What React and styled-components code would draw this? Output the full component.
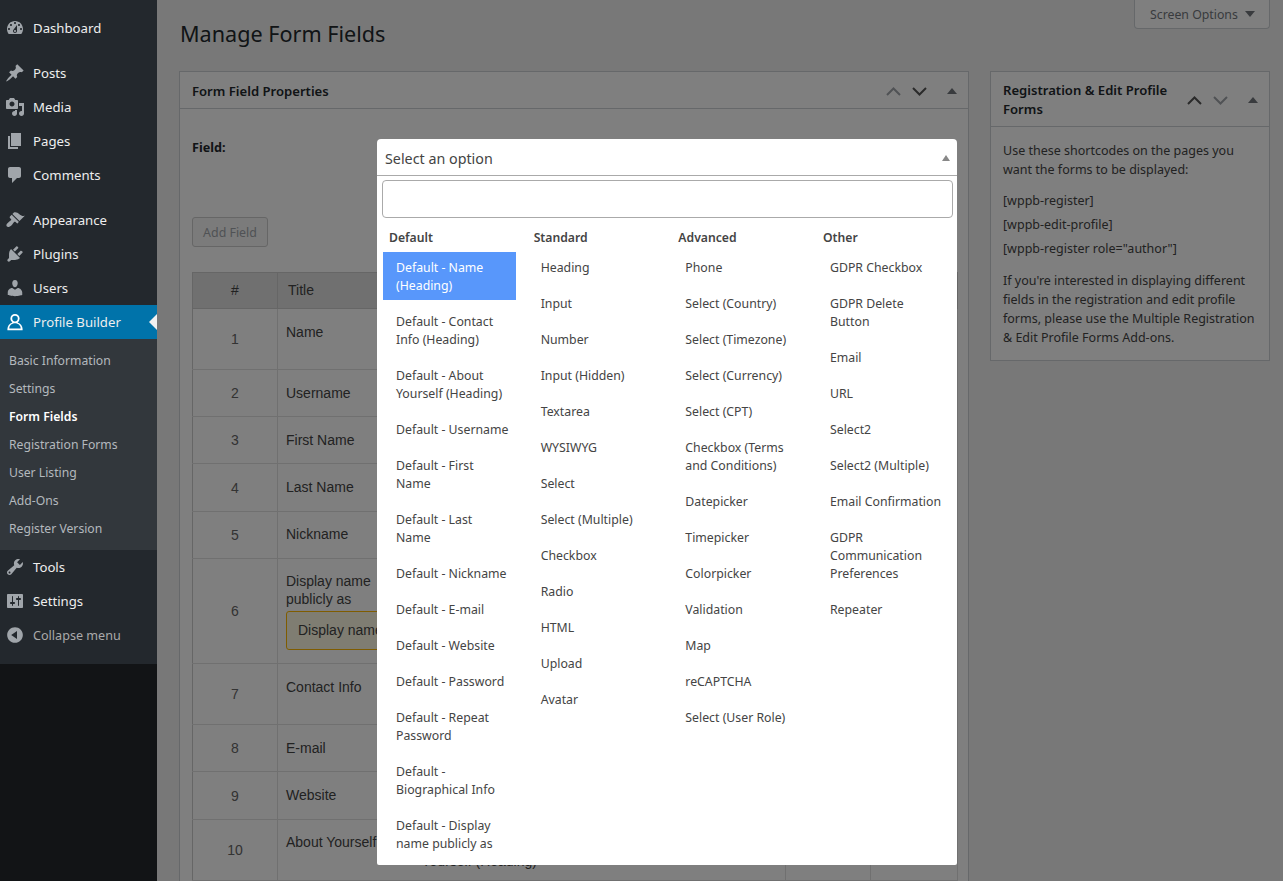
import styled, { createGlobalStyle } from "styled-components";

const GlobalStyle = createGlobalStyle`
  html, body {
    margin: 0;
    padding: 0;
    background: #f1f1f1;
  }
  * {
    box-sizing: border-box;
  }
`;

const UI_FONT = `"Noto Sans", "Open Sans", sans-serif`;

const Root = styled.div`
  display: flex;
  width: 1283px;
  height: 881px;
  overflow: hidden;
  position: relative;
  font-family: ${UI_FONT};
  color: #444;
`;

const Sidebar = styled.aside`
  width: 157px;
  flex: none;
  background: #121416;
`;

const Menu = styled.nav`
  background: #23282d;
  padding: 11px 0 12px;
`;

const MenuRow = styled.div`
  position: relative;
  display: flex;
  align-items: center;
  gap: 8px;
  height: 34px;
  padding-left: 5px;
  margin-bottom: ${(p) => (p.$sep ? "11px" : "0")};
  background: ${(p) => (p.$active ? "#0073aa" : "transparent")};
  color: ${(p) => (p.$dim ? "#aaa" : "#eee")};
  font-size: ${(p) => (p.$dim ? "12.6px" : "13.2px")};
  svg {
    flex: none;
    fill: ${(p) => (p.$active ? "#fff" : "#a0a5aa")};
  }
`;

const ActiveArrow = styled.span`
  position: absolute;
  right: 0;
  top: 9px;
  border: 8px solid transparent;
  border-left: 0;
  border-right-color: #f1f1f1;
`;

const SubMenu = styled.div`
  background: #32373c;
  padding: 8px 0 7px;
`;

const SubItem = styled.div`
  height: 28px;
  line-height: 28px;
  padding-left: 9px;
  font-size: 12.2px;
  font-weight: ${(p) => (p.$active ? 600 : 400)};
  color: ${(p) => (p.$active ? "#fff" : "#b4b9be")};
`;

const Main = styled.main`
  position: relative;
  flex: 1;
  padding: 0 13px 0 22px;
  min-width: 0;
`;

const Overlay = styled.div`
  position: absolute;
  inset: 0;
  background: rgba(0, 0, 0, 0.5);
`;

const TopBar = styled.header`
  display: flex;
  justify-content: space-between;
  align-items: flex-start;
  height: 71px;
`;

const Title = styled.h1`
  margin: 0;
  padding: 18px 0 0 1px;
  font-size: 21.6px;
  line-height: 32px;
  font-weight: 400;
  color: #23282d;
`;

const ScreenOptions = styled.button`
  display: flex;
  align-items: center;
  gap: 7px;
  width: 136px;
  height: 29px;
  padding: 0 0 0 15px;
  background: #fff;
  border: 1px solid #ccd0d4;
  border-top: 0;
  border-radius: 0 0 4px 4px;
  font-family: inherit;
  font-size: 12.3px;
  color: #72777c;
`;

const DownTri = styled.span`
  border: 5px solid transparent;
  border-top: 6px solid #72777c;
  border-bottom: 0;
`;

const Columns = styled.div`
  display: flex;
  align-items: flex-start;
  gap: 21px;
`;

const Box = styled.section`
  width: ${(p) => p.$width}px;
  flex: none;
  background: #fff;
  border: 1px solid #ccd0d4;
`;

const BoxHead = styled.div`
  display: flex;
  align-items: center;
  justify-content: space-between;
  min-height: 37px;
  padding: 9px 12px 7px;
  border-bottom: 1px solid #ccd0d4;
  font-size: 13.1px;
  line-height: 19px;
  font-weight: 600;
  color: #23282d;
  white-space: pre;
`;

const BoxControls = styled.div`
  display: flex;
  align-items: center;
  gap: 9px;
  margin-right: -1px;
`;

const Chevron = styled.svg`
  width: 17px;
  height: 11px;
  fill: none;
  stroke: ${(p) => (p.$muted ? "#a0a5aa" : "#555")};
  stroke-width: 2;
`;

const UpTri = styled.span`
  margin-left: 10px;
  border: 5px solid transparent;
  border-bottom: 6px solid #72777c;
  border-top: 0;
`;

const FormBody = styled.div`
  padding: 29px 12px 0;
`;

const FieldLabel = styled.div`
  font-size: 12.6px;
  line-height: 20px;
  font-weight: 700;
  color: #23282d;
  height: 79px;
`;

const AddButton = styled.button`
  display: block;
  width: 76px;
  height: 30px;
  padding: 0;
  background: #f7f7f7;
  border: 1px solid #ccc;
  border-radius: 3px;
  font-family: inherit;
  font-size: 12.4px;
  color: #a0a5aa;
`;

const Table = styled.table`
  width: 765px;
  margin-top: 25px;
  border-collapse: collapse;
  table-layout: fixed;
  border: 1px solid #ccc;
  font-family: "Liberation Sans", Arial, sans-serif;
  font-size: 14px;
  color: #444;
`;

const HeadCell = styled.th`
  height: 36px;
  padding: 0 10px 2px;
  background: #e1e1e1;
  border: 1px solid #ccc;
  font-weight: 400;
  text-align: ${(p) => (p.$center ? "center" : "left")};
`;

const NumCell = styled.td`
  border: 1px solid #e1e1e1;
  border-left-color: #ccc;
  text-align: center;
  color: #666;
`;

const TextCell = styled.td`
  padding: ${(p) => p.$top || 14}px 8px 0;
  border: 1px solid #e1e1e1;
  ${(p) => p.$openRight && "border-right: 0;"}
  ${(p) => p.$openLeft && "border-left: 0;"}
  vertical-align: top;
  line-height: 18px;
  white-space: pre;
`;

const Notice = styled.div`
  width: 300px;
  height: 39px;
  margin-top: 3px;
  padding: 0 11px;
  line-height: 37px;
  background: #fffbe5;
  border: 1px solid #ffb900;
  border-radius: 3px;
`;

const SideText = styled.div`
  padding: 14px 12px 13px;
  font-size: 12.5px;
  line-height: 19px;
  color: #444;
  p {
    margin: 0 0 10px;
  }
  p:last-child {
    margin: 0;
  }
`;

const Shortcode = styled.div`
  line-height: 24px;
  margin-bottom: 10px;
`;

const Dropdown = styled.div`
  position: absolute;
  left: 377px;
  top: 139px;
  width: 580px;
  height: 726px;
  overflow: hidden;
  background: #fff;
  border-radius: 4px 4px 2px 2px;
`;

const Trigger = styled.div`
  display: flex;
  align-items: center;
  justify-content: space-between;
  height: 37px;
  padding: 2px 7px 0 8px;
  border-bottom: 1px solid #aaa;
  font-size: 14.3px;
  color: #444;
`;

const TriggerArrow = styled.span`
  border: 4px solid transparent;
  border-bottom: 6px solid #888;
  border-top: 0;
`;

const Search = styled.input`
  display: block;
  width: 571px;
  height: 38px;
  margin: 4px 0 0 5px;
  border: 1px solid #aaa;
  border-radius: 4px;
  background: #fff;
`;

const Groups = styled.div`
  display: grid;
  grid-template-columns: repeat(4, 144.67px);
  padding: 8px 0 0 1px;
`;

const Group = styled.div`
  display: flex;
  flex-direction: column;
`;

const GroupLabel = styled.div`
  height: 23px;
  line-height: 23px;
  padding-left: 11px;
  font-size: 12.2px;
  font-weight: 600;
  color: #444;
`;

const Option = styled.div`
  margin: 3px 6.67px 3px 5px;
  padding: 7px 13px 5px;
  font-size: 12.3px;
  line-height: 18px;
  white-space: pre;
  color: ${(p) => (p.$selected ? "#fff" : "#444")};
  background: ${(p) => (p.$selected ? "#5897fb" : "transparent")};
`;

const ICONS = {
  dashboard:
    "M3.76 16h12.48c1.1-1.37 1.76-3.11 1.76-5 0-4.42-3.58-8-8-8s-8 3.58-8 8c0 1.89.66 3.63 1.76 5zM10 4c.55 0 1 .45 1 1s-.45 1-1 1-1-.45-1-1 .45-1 1-1zM6 6c.55 0 1 .45 1 1s-.45 1-1 1-1-.45-1-1 .45-1 1-1zm8 0c.55 0 1 .45 1 1s-.45 1-1 1-1-.45-1-1 .45-1 1-1zm-5.37 5.55L12 7v6c0 1.1-.9 2-2 2s-2-.9-2-2c0-.57.24-1.08.63-1.45zM4 10c.55 0 1 .45 1 1s-.45 1-1 1-1-.45-1-1 .45-1 1-1zm12 0c.55 0 1 .45 1 1s-.45 1-1 1-1-.45-1-1 .45-1 1-1zm-5 3c0-.55-.45-1-1-1s-1 .45-1 1 .45 1 1 1 1-.45 1-1z",
  posts:
    "M10.44 3.02l1.82-1.82 6.36 6.35-1.83 1.82c-1.05-.68-2.48-.57-3.41.36l-.75.75c-.92.93-1.04 2.35-.35 3.41l-1.83 1.82-2.41-2.41-2.8 2.79c-.42.42-3.38 2.71-3.8 2.29s1.86-3.39 2.28-3.81l2.79-2.79L4.1 9.36l1.83-1.82c1.05.69 2.48.57 3.4-.36l.75-.75c.93-.92 1.05-2.35.36-3.41z",
  media:
    "M13 11V4c0-.55-.45-1-1-1h-1.67L9 1H5L3.67 3H2c-.55 0-1 .45-1 1v7c0 .55.45 1 1 1h10c.55 0 1-.45 1-1zM7 4.5c1.38 0 2.5 1.12 2.5 2.5S8.38 9.5 7 9.5 4.5 8.38 4.5 7 5.62 4.5 7 4.5zM14 6h5v10.5c0 1.38-1.12 2.5-2.5 2.5S14 17.88 14 16.5s1.12-2.5 2.5-2.5c.17 0 .34.02.5.05V9h-3V6zm-4 8.05V13h2v3.5c0 1.38-1.12 2.5-2.5 2.5S7 17.88 7 16.5 8.12 14 9.5 14c.17 0 .34.02.5.05z",
  pages: "M6 15V2h10v13H6zm-1 1h8v2H3V5h2v11z",
  comments:
    "M5 2h9c1.1 0 2 .9 2 2v7c0 1.1-.9 2-2 2h-2l-5 5v-5H5c-1.1 0-2-.9-2-2V4c0-1.1.9-2 2-2z",
  appearance:
    "M14.48 11.06L7.41 3.99l1.5-1.5c.5-.56 2.3-.47 3.51.32 1.21.8 1.43 1.28 2.91 2.1 1.18.64 2.45 1.26 4.45.85zm-.71.71L6.7 4.7 4.93 6.47c-.39.39-.39 1.02 0 1.41l1.06 1.06c.39.39.39 1.03 0 1.42-.6.6-1.43 1.11-2.21 1.69-.35.26-.7.53-1.01.84C1.43 13.71.96 15.65 1.91 16.6c.95.95 2.89.48 4.7-1.33.31-.31.58-.66.84-1.01.58-.78 1.09-1.61 1.69-2.21.39-.39 1.03-.39 1.42 0l1.06 1.06c.39.39 1.02.39 1.41 0z",
  plugins:
    "M13.11 4.36L9.87 7.6 8 5.73l3.24-3.24c.35-.34 1.05-.2 1.56.32.52.51.66 1.21.31 1.55zm-8 1.77l.91-1.12 9.01 9.01-1.19.84c-.71.71-2.63 1.16-3.82 1.16H6.14L4.9 17.26c-.59.59-1.54.59-2.12 0-.59-.58-.59-1.53 0-2.12l1.24-1.24v-3.88c0-1.13.4-3.19 1.09-3.89zm7.26 3.97l3.24-3.24c.34-.35 1.04-.21 1.55.31.52.51.66 1.21.31 1.55l-3.24 3.25z",
  users:
    "M10 9.25c-2.27 0-2.73-3.44-2.73-3.44C7 4.02 7.82 2 9.97 2c2.16 0 2.98 2.02 2.71 3.81 0 0-.41 3.44-2.68 3.44zm0 2.57L12.72 10c2.39 0 4.52 2.33 4.52 4.53v2.49s-3.65 1.13-7.24 1.13c-3.65 0-7.24-1.13-7.24-1.13v-2.49c0-2.25 1.94-4.48 4.47-4.48z",
  tools:
    "M16.68 9.77c-1.34 1.34-3.3 1.67-4.95.99l-5.41 6.52c-.99.99-2.59.99-3.58 0s-.99-2.59 0-3.57l6.52-5.42c-.68-1.65-.35-3.61.99-4.95 1.28-1.28 3.12-1.62 4.72-1.06l-2.89 2.89 2.82 2.82 2.86-2.87c.53 1.58.18 3.39-1.08 4.65zM3.81 16.21c.4.39 1.04.39 1.43 0 .4-.4.4-1.04 0-1.43-.39-.4-1.03-.4-1.43 0-.39.39-.39 1.03 0 1.43z",
  settings:
    "M18 16V4c0-.55-.45-1-1-1H3c-.55 0-1 .45-1 1v12c0 .55.45 1 1 1h14c.55 0 1-.45 1-1zM8 11h1c.55 0 1 .45 1 1s-.45 1-1 1H8v1.5c0 .28-.22.5-.5.5s-.5-.22-.5-.5V13H6c-.55 0-1-.45-1-1s.45-1 1-1h1V5.5c0-.28.22-.5.5-.5s.5.22.5.5V11zm5-2h-1c-.55 0-1-.45-1-1s.45-1 1-1h1V5.5c0-.28.22-.5.5-.5s.5.22.5.5V7h1c.55 0 1 .45 1 1s-.45 1-1 1h-1v5.5c0 .28-.22.5-.5.5s-.5-.22-.5-.5V9z",
  collapse:
    "M10 2.16c4.33 0 7.84 3.51 7.84 7.84s-3.51 7.84-7.84 7.84S2.16 14.33 2.16 10 5.71 2.16 10 2.16zm2 11.72V6.12L6.18 9.97z",
  profile:
    "M10 2a4.6 4.6 0 0 0-4.6 4.6c0 1.6.8 3 2 3.8C4.4 11.5 2.4 14 2.4 17v1.2h15.2V17c0-3-2-5.5-5-6.6a4.6 4.6 0 0 0 2-3.8A4.6 4.6 0 0 0 10 2zm0 1.8a2.8 2.8 0 1 1 0 5.6 2.8 2.8 0 0 1 0-5.6zm0 7.4c3.2 0 5.6 2.2 5.7 5.2H4.3c.1-3 2.5-5.2 5.7-5.2z",
};

function Icon({ name }) {
  return (
    <svg width="20" height="20" viewBox="0 0 20 20">
      <path d={ICONS[name]} />
    </svg>
  );
}

function BoxButtons({ upMuted, downMuted }) {
  return (
    <BoxControls>
      <Chevron $muted={upMuted} viewBox="0 0 17 11">
        <path d="M2 9l6.500-6.500L15 9" />
      </Chevron>
      <Chevron $muted={downMuted} viewBox="0 0 17 11">
        <path d="M2 2l6.500 6.500L15 2" />
      </Chevron>
      <UpTri />
    </BoxControls>
  );
}

const TOP_MENU = [
  { icon: "dashboard", label: "Dashboard", sep: true },
  { icon: "posts", label: "Posts" },
  { icon: "media", label: "Media" },
  { icon: "pages", label: "Pages" },
  { icon: "comments", label: "Comments", sep: true },
  { icon: "appearance", label: "Appearance" },
  { icon: "plugins", label: "Plugins" },
  { icon: "users", label: "Users" },
];

const SUB_MENU = [
  "Basic Information",
  "Settings",
  "Form Fields",
  "Registration Forms",
  "User Listing",
  "Add-Ons",
  "Register Version",
];

const ROWS = [
  { title: "Name", height: 61 },
  { title: "Username", height: 47 },
  { title: "First Name", height: 47 },
  { title: "Last Name", height: 48 },
  { title: "Nickname", height: 47, top: 13 },
  { title: "Display name\npublicly as", height: 105, top: 13, notice: "Display name publicly as" },
  { title: "Contact Info", height: 61 },
  { title: "E-mail", height: 47 },
  { title: "Website", height: 48 },
  { title: "About Yourself", height: 61, top: 13, meta: "Default - About\nYourself (Heading)" },
];

const GROUPS = [
  {
    label: "Default",
    options: [
      "Default - Name\n(Heading)",
      "Default - Contact\nInfo (Heading)",
      "Default - About\nYourself (Heading)",
      "Default - Username",
      "Default - First\nName",
      "Default - Last\nName",
      "Default - Nickname",
      "Default - E-mail",
      "Default - Website",
      "Default - Password",
      "Default - Repeat\nPassword",
      "Default -\nBiographical Info",
      "Default - Display\nname publicly as",
    ],
  },
  {
    label: "Standard",
    options: [
      "Heading",
      "Input",
      "Number",
      "Input (Hidden)",
      "Textarea",
      "WYSIWYG",
      "Select",
      "Select (Multiple)",
      "Checkbox",
      "Radio",
      "HTML",
      "Upload",
      "Avatar",
    ],
  },
  {
    label: "Advanced",
    options: [
      "Phone",
      "Select (Country)",
      "Select (Timezone)",
      "Select (Currency)",
      "Select (CPT)",
      "Checkbox (Terms\nand Conditions)",
      "Datepicker",
      "Timepicker",
      "Colorpicker",
      "Validation",
      "Map",
      "reCAPTCHA",
      "Select (User Role)",
    ],
  },
  {
    label: "Other",
    options: [
      "GDPR Checkbox",
      "GDPR Delete\nButton",
      "Email",
      "URL",
      "Select2",
      "Select2 (Multiple)",
      "Email Confirmation",
      "GDPR\nCommunication\nPreferences",
      "Repeater",
    ],
  },
];

export default function App() {
  return (
    <Root>
      <GlobalStyle />
      <Sidebar>
        <Menu>
          {TOP_MENU.map((item) => (
            <MenuRow key={item.label} $sep={item.sep}>
              <Icon name={item.icon} />
              {item.label}
            </MenuRow>
          ))}
          <MenuRow $active>
            <Icon name="profile" />
            Profile Builder
            <ActiveArrow />
          </MenuRow>
          <SubMenu>
            {SUB_MENU.map((label) => (
              <SubItem key={label} $active={label === "Form Fields"}>
                {label}
              </SubItem>
            ))}
          </SubMenu>
          <MenuRow>
            <Icon name="tools" />
            Tools
          </MenuRow>
          <MenuRow>
            <Icon name="settings" />
            Settings
          </MenuRow>
          <MenuRow $dim>
            <Icon name="collapse" />
            Collapse menu
          </MenuRow>
        </Menu>
      </Sidebar>

      <Main>
        <TopBar>
          <Title>Manage Form Fields</Title>
          <ScreenOptions>
            Screen Options
            <DownTri />
          </ScreenOptions>
        </TopBar>
        <Columns>
          <Box $width={790}>
            <BoxHead>
              Form Field Properties
              <BoxButtons upMuted />
            </BoxHead>
            <FormBody>
              <FieldLabel>Field:</FieldLabel>
              <AddButton>Add Field</AddButton>
              <Table>
                <colgroup>
                  <col width="85" />
                  <col width="136" />
                  <col width="372" />
                  <col width="85" />
                  <col width="87" />
                </colgroup>
                <thead>
                  <tr>
                    <HeadCell $center>#</HeadCell>
                    <HeadCell>Title</HeadCell>
                    <HeadCell />
                    <HeadCell />
                    <HeadCell />
                  </tr>
                </thead>
                <tbody>
                  {ROWS.map((row, i) => (
                    <tr key={row.title} style={{ height: row.height }}>
                      <NumCell>{i + 1}</NumCell>
                      <TextCell $top={row.top} $openRight>
                        {row.title}
                        {row.notice && <Notice>{row.notice}</Notice>}
                      </TextCell>
                      <TextCell $openLeft>{row.meta}</TextCell>
                      <TextCell />
                      <TextCell />
                    </tr>
                  ))}
                </tbody>
              </Table>
            </FormBody>
          </Box>
          <Box $width={280}>
            <BoxHead>
              {"Registration & Edit Profile\nForms"}
              <BoxButtons downMuted />
            </BoxHead>
            <SideText>
              <p>
                Use these shortcodes on the pages you want the forms to be displayed:
              </p>
              <Shortcode>
                [wppb-register]
                <br />
                [wppb-edit-profile]
                <br />
                [wppb-register role="author"]
              </Shortcode>
              <p>
                If you're interested in displaying different fields in the
                registration and edit profile forms, please use the Multiple
                Registration &amp; Edit Profile Forms Add-ons.
              </p>
            </SideText>
          </Box>
        </Columns>
        <Overlay />
      </Main>

      <Dropdown>
        <Trigger>
          Select an option
          <TriggerArrow />
        </Trigger>
        <Search />
        <Groups>
          {GROUPS.map((group) => (
            <Group key={group.label}>
              <GroupLabel>{group.label}</GroupLabel>
              {group.options.map((option, i) => (
                <Option key={option} $selected={group.label === "Default" && i === 0}>
                  {option}
                </Option>
              ))}
            </Group>
          ))}
        </Groups>
      </Dropdown>
    </Root>
  );
}
